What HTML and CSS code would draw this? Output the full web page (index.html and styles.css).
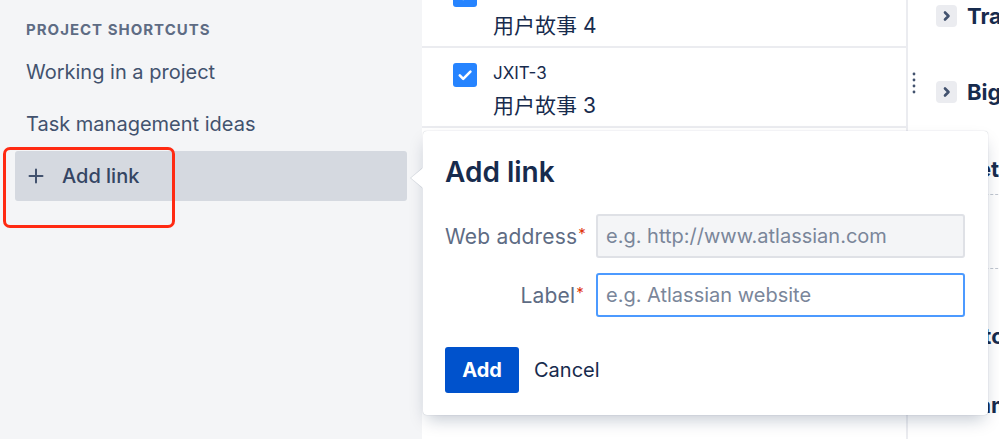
FILE: index.html
```html
<!DOCTYPE html>
<html lang="en">
<head>
  <meta charset="UTF-8">
  <title>Project shortcuts | Add link</title>
  <link rel="stylesheet" href="styles.css">
</head>
<body>
  <div class="app">
    <aside class="sidebar">
      <div class="sidebar-title">PROJECT SHORTCUTS</div>
      <a class="shortcut">Working in a project</a>
      <a class="shortcut">Task management ideas</a>
      <a class="shortcut shortcut-add">
        <svg class="plus" width="16" height="16" viewBox="0 0 16 16">
          <path d="M8 1.5v13M1.5 8h13" stroke="#42526e" stroke-width="2" stroke-linecap="round"/>
        </svg>
        <span>Add link</span>
      </a>
      <div class="sidebar-rest"></div>
    </aside>

    <section class="issues">
      <div class="issue issue-first">
        <svg class="check" width="24" height="24" viewBox="0 0 24 24">
          <rect width="24" height="24" rx="3" fill="#2684ff"/>
          <path d="M6.8 12.4l3.4 3.4L17.4 8.6" fill="none" stroke="#fff" stroke-width="2.6" stroke-linecap="round" stroke-linejoin="round"/>
        </svg>
        <div class="issue-text">
          <div class="issue-key">JXIT-4</div>
          <div class="issue-summary">用户故事 4</div>
        </div>
      </div>
      <div class="issue">
        <svg class="check" width="24" height="24" viewBox="0 0 24 24">
          <rect width="24" height="24" rx="3" fill="#2684ff"/>
          <path d="M6.8 12.4l3.4 3.4L17.4 8.6" fill="none" stroke="#fff" stroke-width="2.6" stroke-linecap="round" stroke-linejoin="round"/>
        </svg>
        <div class="issue-text">
          <div class="issue-key">JXIT-3</div>
          <div class="issue-summary">用户故事 3</div>
        </div>
      </div>
    </section>

    <section class="details">
      <div class="handle">
        <svg width="4" height="22" viewBox="0 0 4 22">
          <circle cx="2" cy="2" r="1.4" fill="#42526e"/>
          <circle cx="2" cy="8" r="1.4" fill="#42526e"/>
          <circle cx="2" cy="14" r="1.4" fill="#42526e"/>
          <circle cx="2" cy="20" r="1.4" fill="#42526e"/>
        </svg>
      </div>
      <div class="details-body">
        <div class="group group-first">
          <span class="toggle"><svg width="21" height="22" viewBox="0 0 21 22"><path d="M9 7.5l3.5 3.5L9 14.5" fill="none" stroke="#42526e" stroke-width="2.6" stroke-linecap="round" stroke-linejoin="round"/></svg></span>
          <span class="group-name">Transitions</span>
        </div>
        <div class="group">
          <span class="toggle"><svg width="21" height="22" viewBox="0 0 21 22"><path d="M9 7.5l3.5 3.5L9 14.5" fill="none" stroke="#42526e" stroke-width="2.6" stroke-linecap="round" stroke-linejoin="round"/></svg></span>
          <span class="group-name">Big picture</span>
        </div>
        <div class="field field-head">Details</div>
        <div class="field field-empty"></div>
        <div class="field field-plain">Mentor</div>
        <div class="field field-plain field-last">Team</div>
      </div>
    </section>

    <div class="annotation"></div>

    <div class="popup">
      <h3 class="popup-title">Add link</h3>
      <div class="form">
        <label class="form-label">Web address<span class="req">*</span></label>
        <input class="form-input" type="text" placeholder="e.g. http://www.atlassian.com">
        <label class="form-label">Label<span class="req">*</span></label>
        <input class="form-input form-input-active" type="text" placeholder="e.g. Atlassian website">
      </div>
      <div class="actions">
        <button class="btn-primary">Add</button>
        <button class="btn-link">Cancel</button>
      </div>
    </div>
  </div>
</body>
</html>
```

FILE: styles.css
```css
body {
  margin: 0;
  font-family: Inter, "Noto Sans CJK SC", sans-serif;
  color: #172b4d;
  background: #fff;
}
.app {
  position: relative;
  display: flex;
  width: 999px;
  height: 439px;
  overflow: hidden;
}
.sidebar {
  width: 422px;
  flex-shrink: 0;
  box-sizing: border-box;
  padding: 20px 15px 0;
  background: #f4f5f7;
}
.sidebar-title {
  padding-left: 11px;
  font-size: 15px;
  line-height: 20px;
  font-weight: 700;
  letter-spacing: 1px;
  color: #5e6c84;
  margin-bottom: 7px;
}
.shortcut {
  display: flex;
  align-items: center;
  height: 50px;
  padding-left: 11px;
  margin-bottom: 2px;
  border-radius: 3px;
  font-size: 20px;
  color: #42526e;
}
.shortcut-add {
  background: #d5d9e0;
  color: #344563;
  padding-left: 13px;
  font-weight: 500;
}
.plus {
  margin-right: 18px;
}
.annotation {
  position: absolute;
  left: 3px;
  top: 147px;
  width: 172px;
  height: 81px;
  box-sizing: border-box;
  border: 3px solid #ff2a12;
  border-radius: 7px;
}
.issues {
  width: 484px;
  flex-shrink: 0;
  border-right: 2px solid #ebecf0;
}
.issue {
  display: flex;
  gap: 16px;
  height: 78px;
  padding: 0 0 0 31px;
  border-bottom: 2px solid #ebecf0;
}
.issue-first {
  margin-top: -32px;
}
.check {
  margin-top: 15px;
  flex-shrink: 0;
}
.issue-text {
  padding-top: 15px;
}
.issue-key {
  font-size: 17px;
  line-height: 20px;
}
.issue-summary {
  margin-top: 9px;
  font-size: 21px;
  line-height: 28px;
}
.details {
  display: flex;
  flex: 1;
}
.handle {
  width: 28px;
  flex-shrink: 0;
  padding: 72px 0 0 4px;
  box-sizing: border-box;
}
.details-body {
  flex: 1;
  white-space: nowrap;
}
.group {
  display: flex;
  align-items: center;
  gap: 10px;
  height: 76px;
}
.group-first {
  margin-top: -22px;
}
.toggle {
  display: flex;
  width: 21px;
  height: 22px;
  border-radius: 4px;
  background: #ebecf0;
}
.group-name,
.field {
  font-size: 22px;
  font-weight: 700;
  color: #172b4d;
}
.field-head {
  height: 64px;
  line-height: 78px;
  padding-left: 26px;
  border-bottom: 1px dashed #c1c7d0;
}
.field-empty {
  height: 73px;
  border-bottom: 1px dashed #c1c7d0;
}
.field-plain {
  height: 76px;
  line-height: 134px;
}
.field-last {
  line-height: 120px;
  padding-left: 16px;
}
.popup {
  position: absolute;
  left: 423px;
  top: 131px;
  width: 565px;
  height: 284px;
  box-sizing: border-box;
  padding: 25px 23px 0 22px;
  background: #fff;
  border-radius: 4px;
  box-shadow: 0 8px 16px -4px rgba(9, 30, 66, 0.25), 0 0 1px rgba(9, 30, 66, 0.31);
}
.popup::before {
  content: "";
  position: absolute;
  left: -12px;
  top: 37px;
  border-right: 12px solid #fff;
  border-top: 10px solid transparent;
  border-bottom: 10px solid transparent;
  filter: drop-shadow(-1px 0 0 rgba(9, 30, 66, 0.12));
}
.popup-title {
  margin: 0 0 26px;
  font-size: 28px;
  line-height: 32px;
  font-weight: 600;
  color: #172b4d;
}
.form {
  display: grid;
  grid-template-columns: 139px 1fr;
  column-gap: 12px;
  row-gap: 15px;
  align-items: center;
}
.form-label {
  text-align: right;
  font-size: 21px;
  letter-spacing: 0.2px;
  color: #5e6c84;
  white-space: nowrap;
}
.req {
  color: #de350b;
  font-size: 15px;
  vertical-align: 5px;
  margin-left: 1px;
}
.form-input {
  height: 44px;
  box-sizing: border-box;
  padding: 0 8px;
  border: 2px solid #dfe1e6;
  border-radius: 3px;
  background: #f4f5f7;
  font-family: inherit;
  font-size: 20px;
  color: #172b4d;
  outline: none;
}
.form-input::placeholder {
  color: #7a869a;
}
.form-input-active {
  background: #fff;
  border-color: #4c9aff;
}
.actions {
  display: flex;
  align-items: center;
  gap: 15px;
  margin-top: 30px;
}
.btn-primary {
  width: 74px;
  height: 46px;
  border: none;
  border-radius: 3px;
  background: #0052cc;
  color: #fff;
  font-family: inherit;
  font-size: 20px;
  font-weight: 700;
}
.btn-link {
  padding: 0;
  border: none;
  background: none;
  font-family: inherit;
  font-size: 20px;
  color: #172b4d;
}
```
